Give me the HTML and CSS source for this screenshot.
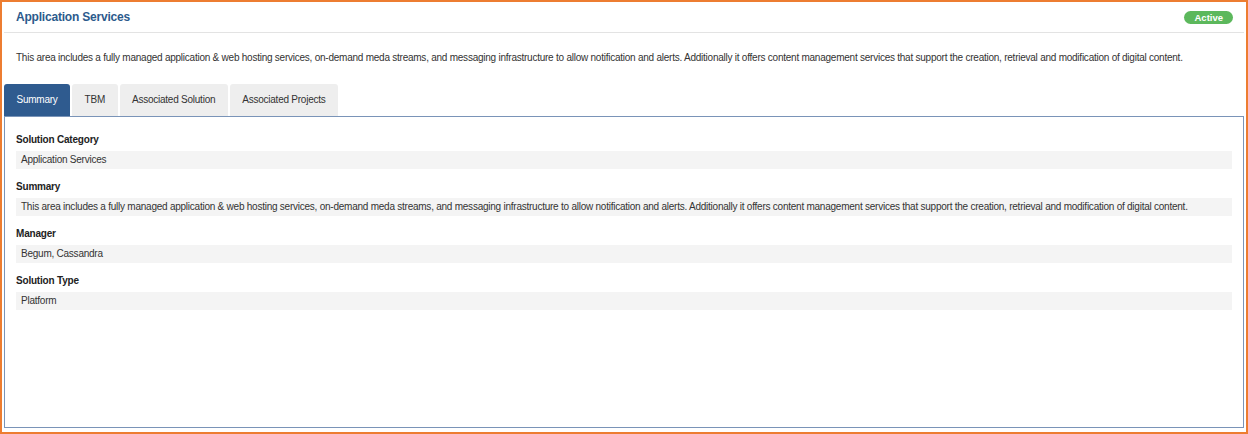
FILE: index.html
```html
<!DOCTYPE html>
<html lang="en">
<head>
    <meta charset="UTF-8">
    <meta name="viewport" content="width=device-width, initial-scale=1.0">
    <title>Application Services</title>
    <link rel="stylesheet" href="styles.css">
</head>
<body>
    <div class="frame">
        <div class="header">
            <h2 class="title">Application Services</h2>
            <span class="badge">Active</span>
        </div>

        <p class="desc">This area includes a fully managed application &amp; web hosting services, on-demand meda streams, and messaging infrastructure to allow notification and alerts. Additionally it offers content management services that support the creation, retrieval and modification of digital content.</p>

        <div class="tabs">
            <div class="tab active">Summary</div>
            <div class="tab">TBM</div>
            <div class="tab">Associated Solution</div>
            <div class="tab">Associated Projects</div>
        </div>

        <div class="panel">
            <div class="field">
                <div class="label">Solution Category</div>
                <div class="value">Application Services</div>
            </div>
            <div class="field">
                <div class="label">Summary</div>
                <div class="value">This area includes a fully managed application &amp; web hosting services, on-demand meda streams, and messaging infrastructure to allow notification and alerts. Additionally it offers content management services that support the creation, retrieval and modification of digital content.</div>
            </div>
            <div class="field">
                <div class="label">Manager</div>
                <div class="value">Begum, Cassandra</div>
            </div>
            <div class="field">
                <div class="label">Solution Type</div>
                <div class="value">Platform</div>
            </div>
        </div>
    </div>
</body>
</html>
```

FILE: styles.css
```css
body {
    margin: 0;
    font-family: "Liberation Sans", Arial, sans-serif;
    background: #fff;
    color: #333;
}
.frame {
    width: 1248px;
    height: 434px;
    box-sizing: border-box;
    border: 2px solid #ed7d31;
    padding: 0 2px;
    background: #fff;
}
.header {
    height: 30px;
    display: flex;
    align-items: center;
    justify-content: space-between;
    padding: 0 11px 0 12px;
    border-bottom: 1px solid #e3e3e3;
}
.title {
    margin: 0;
    font-size: 12px;
    font-weight: bold;
    color: #2c5a8c;
    letter-spacing: -0.2px;
}
.badge {
    background: #5cb85c;
    color: #fff;
    font-size: 9.5px;
    font-weight: bold;
    padding: 1px 10px;
    border-radius: 8px;
    line-height: 11px;
}
.desc {
    margin: 18px 0 19px;
    padding: 0 12px;
    font-size: 10px;
    letter-spacing: -0.24px;
    line-height: 14px;
    color: #333;
    white-space: nowrap;
}
.tabs {
    display: flex;
    gap: 2px;
}
.tab {
    height: 32px;
    line-height: 32px;
    padding: 0 12.5px;
    font-size: 10px;
    letter-spacing: -0.24px;
    background: #eee;
    color: #333;
    border-radius: 3px 3px 0 0;
}
.tab.active {
    background: #2f5b8f;
    color: #fff;
}
.panel {
    height: 312px;
    box-sizing: border-box;
    border: 1px solid #7a94b8;
    padding: 16px 11px 0 11px;
}
.field {
    margin-bottom: 11px;
}
.label {
    font-size: 10px;
    font-weight: bold;
    letter-spacing: -0.2px;
    line-height: 14px;
    color: #222;
    margin-bottom: 4px;
}
.value {
    background: #f4f4f4;
    height: 18px;
    line-height: 18px;
    padding: 0 5px;
    font-size: 10px;
    letter-spacing: -0.24px;
    color: #333;
    white-space: nowrap;
}
```
